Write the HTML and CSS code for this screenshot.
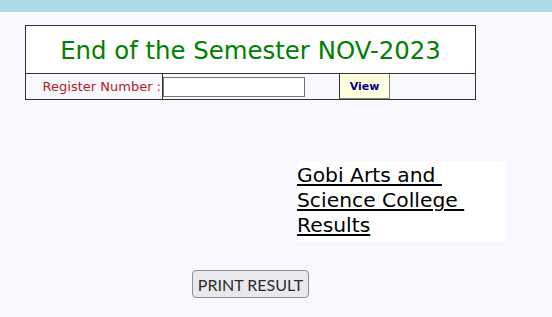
FILE: index.html
```html
<!DOCTYPE html>
<html>
<head>
<meta charset="utf-8">
<link rel="stylesheet" href="styles.css">
</head>
<body>
<div class="topbar"></div>
<div class="panel">
  <div class="title">End of the Semester NOV-2023</div>
  <div class="row">
    <div class="label">Register Number :</div>
    <div class="field"><input class="regno" type="text"></div>
    <button class="view">View</button>
  </div>
</div>
<div class="college"><a class="college-link" href="#">Gobi Arts and&nbsp;<br>Science College&nbsp;<br>Results</a></div>
<button class="print">PRINT RESULT</button>
</body>
</html>
```
FILE: styles.css
```css
html, body {
  margin: 0;
  padding: 0;
  background: #F8F8FF;
  font-family: "DejaVu Sans", Verdana, sans-serif;
}
.topbar {
  height: 12px;
  background: #ADD8E6;
}
.panel {
  margin: 13px 0 0 25px;
  width: 451px;
  box-sizing: border-box;
  border: 1px solid #333;
}
.title {
  height: 47px;
  box-sizing: border-box;
  padding-top: 2px;
  background: #fff;
  color: #008000;
  font-size: 24.4px;
  line-height: 45px;
  text-align: center;
}
.row {
  display: flex;
  align-items: stretch;
  height: 25px;
  border-top: 1px solid #333;
  background: #F8F8FF;
}
.label {
  width: 137px;
  box-sizing: border-box;
  border-right: 1px solid #333;
  color: #B22222;
  font-size: 13px;
  line-height: 26px;
  text-align: right;
  padding-right: 1px;
}
.field {
  display: flex;
  align-items: center;
  width: 176px;
}
.regno {
  width: 142px;
  height: 20px;
  box-sizing: border-box;
  margin: 0;
  border: 1px solid #767676;
  background: #fff;
  padding: 1px 2px;
}
.view {
  width: 51px;
  height: 25px;
  box-sizing: border-box;
  margin: 0;
  padding: 0;
  background: #FFFFE0;
  border: 1px solid #808080;
  border-left-color: #333;
  border-top: none;
  color: #000080;
  font-family: "DejaVu Sans", Verdana, sans-serif;
  font-weight: bold;
  font-size: 11px;
}
.college {
  margin: 61px 0 0 297px;
  width: 208px;
  height: 81px;
  box-sizing: border-box;
  padding-top: 2px;
  background: #fff;
  font-size: 20.3px;
  line-height: 25px;
}
.college-link {
  color: #000;
  text-decoration: underline;
}
.print {
  display: block;
  margin: 28px 0 0 192px;
  width: 117px;
  height: 28px;
  box-sizing: border-box;
  padding: 0;
  background: #E9E9ED;
  border: 1px solid #8F8F9D;
  border-radius: 4px;
  color: #2b2b2b;
  font-family: Lato, "Liberation Sans", sans-serif;
  font-size: 16px;
}
```
